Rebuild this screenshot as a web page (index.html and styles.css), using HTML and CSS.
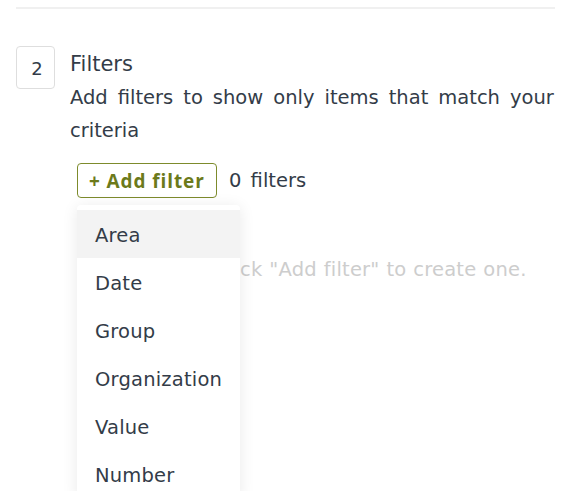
FILE: index.html
```html
<!DOCTYPE html>
<html>
<head>
<meta charset="utf-8">
<link rel="stylesheet" href="styles.css">
</head>
<body>
<div class="page">
  <hr class="divider">
  <section class="step">
    <div class="step-num">2</div>
    <div class="step-body">
      <h2 class="step-title">Filters</h2>
      <p class="step-desc">Add filters to show only items that match your criteria</p>
      <div class="filter-bar">
        <div class="add-wrap">
          <button class="add-btn">+ Add filter</button>
          <ul class="menu">
            <li class="menu-item active">Area</li>
            <li class="menu-item">Date</li>
            <li class="menu-item">Group</li>
            <li class="menu-item">Organization</li>
            <li class="menu-item">Value</li>
            <li class="menu-item">Number</li>
          </ul>
        </div>
        <span class="count">0 filters</span>
      </div>
      <p class="empty">No filter set. Click "Add filter" to create one.</p>
    </div>
  </section>
</div>
</body>
</html>
```

FILE: styles.css
```css
html, body {
  margin: 0;
  padding: 0;
  background: #fff;
  overflow: hidden;
}
body {
  font-family: "DejaVu Sans", "Noto Sans", sans-serif;
  color: #333c48;
}
.page {
  width: 578px;
  height: 491px;
  padding: 7px 23px 0 16px;
  box-sizing: border-box;
}
.divider {
  border: 0;
  border-top: 2px solid #f0f0f0;
  margin: 0;
}
.step {
  display: flex;
  margin-top: 37px;
}
.step-num {
  border: 1px solid #dedede;
  border-radius: 4px;
  display: flex;
  align-items: center;
  justify-content: center;
  padding: 2px 0 0 3px;
  box-sizing: border-box;
  height: 43px;
  width: 39px;
  font-size: 18px;
  flex: none;
}
.step-body {
  margin-left: 15px;
  flex: 1;
}
.step-title {
  margin: 4px 0 0;
  font-size: 21px;
  font-weight: 400;
  line-height: 28px;
}
.step-desc {
  margin: 3px 0 0;
  font-size: 19.5px;
  line-height: 33px;
  word-spacing: 3.8px;
  width: 492px;
}
.filter-bar {
  display: flex;
  align-items: center;
  margin-top: 16px;
  margin-left: 7px;
}
.add-wrap {
  position: relative;
}
.add-btn {
  display: block;
  font-family: "Open Sans", sans-serif;
  font-size: 19px;
  font-weight: 700;
  letter-spacing: 0.9px;
  color: #6c7a1b;
  background: #fff;
  border: 1.5px solid #7d8b2c;
  border-radius: 4px;
  height: 35px;
  padding: 0 0 0 11px;
  text-align: left;
  width: 140px;
}
.count {
  margin-left: 12px;
  font-size: 19.5px;
  word-spacing: 3px;
}
.menu {
  position: absolute;
  top: 42px;
  left: 0;
  width: 163px;
  margin: 0;
  padding: 5px 0 0;
  list-style: none;
  background: #fff;
  border-radius: 4px;
  box-shadow: 0 2px 16px rgba(0, 0, 0, 0.09);
  z-index: 2;
}
.menu-item {
  box-sizing: border-box;
  height: 48px;
  line-height: 44px;
  padding: 4px 0 0 18px;
  font-size: 19.5px;
  letter-spacing: 0.2px;
}
.menu-item.active {
  background: #f3f3f3;
}
.empty {
  margin: 55px 0 0 14px;
  font-size: 19.5px;
  line-height: 33px;
  word-spacing: 0.5px;
  letter-spacing: 0.2px;
  color: #cdcdcd;
  white-space: nowrap;
}
```
